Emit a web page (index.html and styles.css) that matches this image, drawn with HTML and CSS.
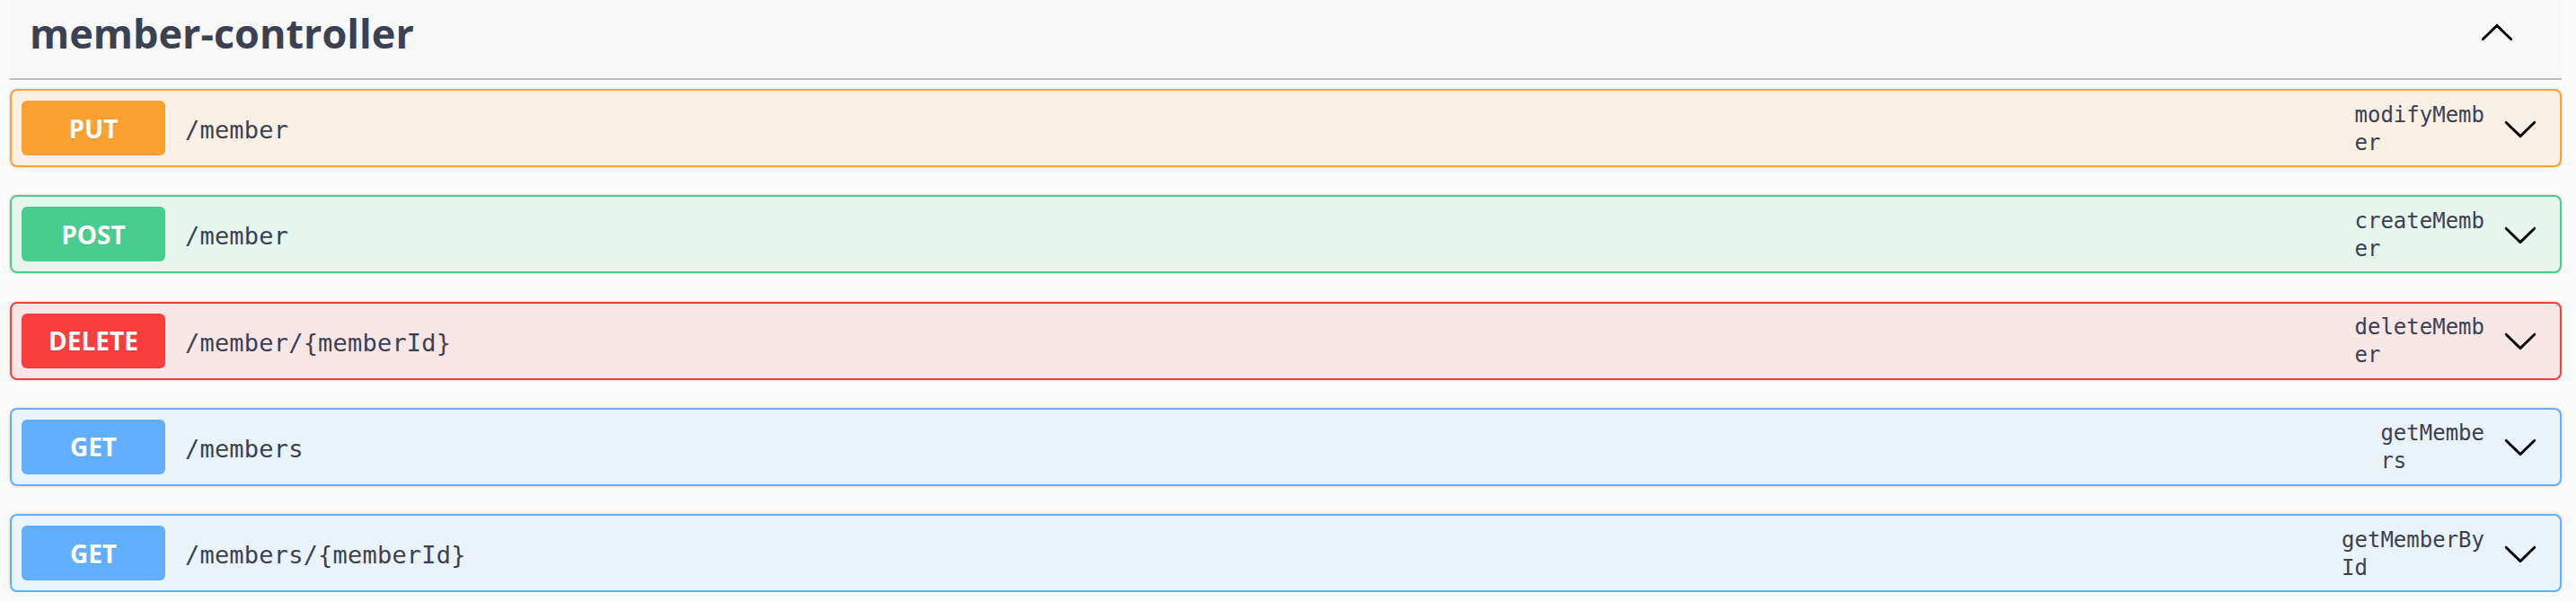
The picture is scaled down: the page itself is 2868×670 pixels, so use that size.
FILE: index.html
```html
<!DOCTYPE html>
<html lang="en">
<head>
<meta charset="utf-8">
<title>member-controller</title>
<link rel="stylesheet" href="styles.css">
</head>
<body>
<div class="wrapper">
  <div class="tag-section">
    <h3 class="tag-header">
      <span class="tag-name">member-controller</span>
      <svg class="arrow up" width="40" height="40" viewBox="0 0 20 20"><path d="M17.418 6.109c.272-.268.709-.268.979 0s.271.701 0 .969l-7.908 7.83c-.27.268-.707.268-.979 0l-7.908-7.83c-.27-.268-.27-.701 0-.969.271-.268.709-.268.979 0L10 13.25l7.418-7.141z"/></svg>
    </h3>
    <div class="ops">
      <div class="opblock put">
        <span class="method">PUT</span>
        <span class="path">/member</span>
        <span class="opid">modifyMemb<br>er</span>
        <svg class="arrow" width="40" height="40" viewBox="0 0 20 20"><path d="M17.418 6.109c.272-.268.709-.268.979 0s.271.701 0 .969l-7.908 7.83c-.27.268-.707.268-.979 0l-7.908-7.83c-.27-.268-.27-.701 0-.969.271-.268.709-.268.979 0L10 13.25l7.418-7.141z"/></svg>
      </div>
      <div class="opblock post">
        <span class="method">POST</span>
        <span class="path">/member</span>
        <span class="opid">createMemb<br>er</span>
        <svg class="arrow" width="40" height="40" viewBox="0 0 20 20"><path d="M17.418 6.109c.272-.268.709-.268.979 0s.271.701 0 .969l-7.908 7.83c-.27.268-.707.268-.979 0l-7.908-7.83c-.27-.268-.27-.701 0-.969.271-.268.709-.268.979 0L10 13.25l7.418-7.141z"/></svg>
      </div>
      <div class="opblock delete">
        <span class="method">DELETE</span>
        <span class="path">/member/{memberId}</span>
        <span class="opid">deleteMemb<br>er</span>
        <svg class="arrow" width="40" height="40" viewBox="0 0 20 20"><path d="M17.418 6.109c.272-.268.709-.268.979 0s.271.701 0 .969l-7.908 7.83c-.27.268-.707.268-.979 0l-7.908-7.83c-.27-.268-.27-.701 0-.969.271-.268.709-.268.979 0L10 13.25l7.418-7.141z"/></svg>
      </div>
      <div class="opblock get">
        <span class="method">GET</span>
        <span class="path">/members</span>
        <span class="opid">getMembe<br>rs</span>
        <svg class="arrow" width="40" height="40" viewBox="0 0 20 20"><path d="M17.418 6.109c.272-.268.709-.268.979 0s.271.701 0 .969l-7.908 7.83c-.27.268-.707.268-.979 0l-7.908-7.83c-.27-.268-.27-.701 0-.969.271-.268.709-.268.979 0L10 13.25l7.418-7.141z"/></svg>
      </div>
      <div class="opblock get">
        <span class="method">GET</span>
        <span class="path">/members/{memberId}</span>
        <span class="opid">getMemberBy<br>Id</span>
        <svg class="arrow" width="40" height="40" viewBox="0 0 20 20"><path d="M17.418 6.109c.272-.268.709-.268.979 0s.271.701 0 .969l-7.908 7.83c-.27.268-.707.268-.979 0l-7.908-7.83c-.27-.268-.27-.701 0-.969.271-.268.709-.268.979 0L10 13.25l7.418-7.141z"/></svg>
      </div>
    </div>
  </div>
</div>
</body>
</html>
```

FILE: styles.css
```css
html, body {
  margin: 0;
  padding: 0;
  background: #fafafa;
}
.wrapper {
  padding: 0 16px 0 11px;
}
.tag-header {
  margin: 0;
  box-sizing: border-box;
  height: 89px;
  display: flex;
  align-items: flex-start;
  justify-content: space-between;
  padding: 0 52px 0 22px;
  background: #f8f8f8;
  border-bottom: 2px solid #bdbdc1;
}
.tag-name {
  font-family: "Open Sans", "Noto Sans", sans-serif;
  font-weight: 700;
  font-size: 45px;
  line-height: 74px;
  color: #3b4151;
}
.arrow {
  flex: none;
  fill: #000;
}
.arrow.up {
  transform: rotate(180deg);
  margin-top: 17px;
}
.ops {
  display: flex;
  flex-direction: column;
  gap: 31.25px;
  padding-top: 10px;
}
.opblock {
  height: 87px;
  box-sizing: border-box;
  border: 2px solid;
  border-radius: 8px;
  box-shadow: 0 0 3px rgba(0, 0, 0, 0.19);
  display: flex;
  align-items: center;
  padding: 0 24px 0 11px;
}
.method {
  flex: none;
  width: 160px;
  height: 61px;
  border-radius: 6px;
  display: flex;
  align-items: center;
  justify-content: center;
  color: #fff;
  font-family: "Open Sans", "Noto Sans", sans-serif;
  font-weight: 700;
  font-size: 28px;
  text-shadow: 0 1px 0 rgba(0, 0, 0, 0.1);
}
.path {
  flex: 1;
  padding: 4px 0 0 22px;
  font-family: "DejaVu Sans Mono", monospace;
  font-size: 27px;
  letter-spacing: 0.2px;
  color: #3b4151;
}
.opid {
  flex: none;
  font-family: "DejaVu Sans Mono", monospace;
  font-size: 24px;
  line-height: 31px;
  color: #3b4151;
  margin-right: 20px;
  padding-top: 2px;
}
.put { border-color: #fca130; background: rgba(252, 161, 48, 0.1); }
.put .method { background: #fca130; }
.post { border-color: #49cc90; background: rgba(73, 204, 144, 0.1); }
.post .method { background: #49cc90; }
.delete { border-color: #f93e3e; background: rgba(249, 62, 62, 0.1); }
.delete .method { background: #f93e3e; }
.get { border-color: #61affe; background: rgba(97, 175, 254, 0.1); }
.get .method { background: #61affe; }
```
